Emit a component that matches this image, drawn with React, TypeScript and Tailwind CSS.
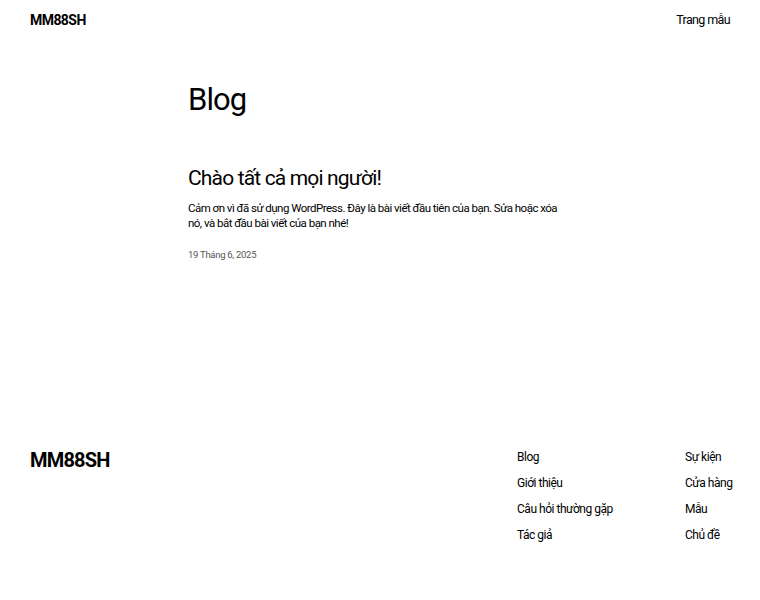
export default function App() {
  const font = { fontFamily: 'Roboto, "Noto Sans", sans-serif' };
  const col1 = ['Blog', 'Giới thiệu', 'Câu hỏi thường gặp', 'Tác giả'];
  const col2 = ['Sự kiện', 'Cửa hàng', 'Mẫu', 'Chủ đề'];
  return (
    <div className="min-h-[600px] bg-white text-black" style={font}>
      {/* Header */}
      <header className="flex items-center justify-between px-[30px] h-[41px]">
        <a className="text-[14px] font-bold tracking-[-0.04em]">MM88SH</a>
        <a className="text-[12.5px] tracking-[-0.05em]">Trang mẫu</a>
      </header>

      <main className="mx-auto w-[384px] pt-[40px]">
        <h1 className="text-[31px] leading-[38px] tracking-[-0.03em]">Blog</h1>
        <article className="mt-[46px]">
          <h2 className="text-[21px] leading-[26px] tracking-[-0.04em]">Chào tất cả mọi người!</h2>
          <p className="mt-[10px] text-[11.5px] leading-[15px] tracking-[-0.045em]">
            Cảm ơn vì đã sử dụng WordPress. Đây là bài viết đầu tiên của bạn. Sửa hoặc xóa nó, và bắt đầu bài viết của bạn nhé!
          </p>
          <div className="mt-[17px] text-[9.5px] tracking-[-0.03em] text-[#555]">19 Tháng 6, 2025</div>
        </article>
      </main>

      {/* Footer */}
      <footer className="mt-[187px] flex justify-between px-[30px]">
        <div className="text-[20px] font-bold tracking-[-0.04em] leading-[24px] mt-[-1px]">MM88SH</div>
        <div className="flex">
          <ul className="w-[168px] flex flex-col gap-[10px]">
            {col1.map(t => (
              <li key={t} className="text-[12px] leading-[16px] tracking-[-0.04em]">{t}</li>
            ))}
          </ul>
          <ul className="w-[45px] flex flex-col gap-[10px]">
            {col2.map(t => (
              <li key={t} className="text-[12px] leading-[16px] tracking-[-0.04em] whitespace-nowrap">{t}</li>
            ))}
          </ul>
        </div>
      </footer>
    </div>
  );
}
